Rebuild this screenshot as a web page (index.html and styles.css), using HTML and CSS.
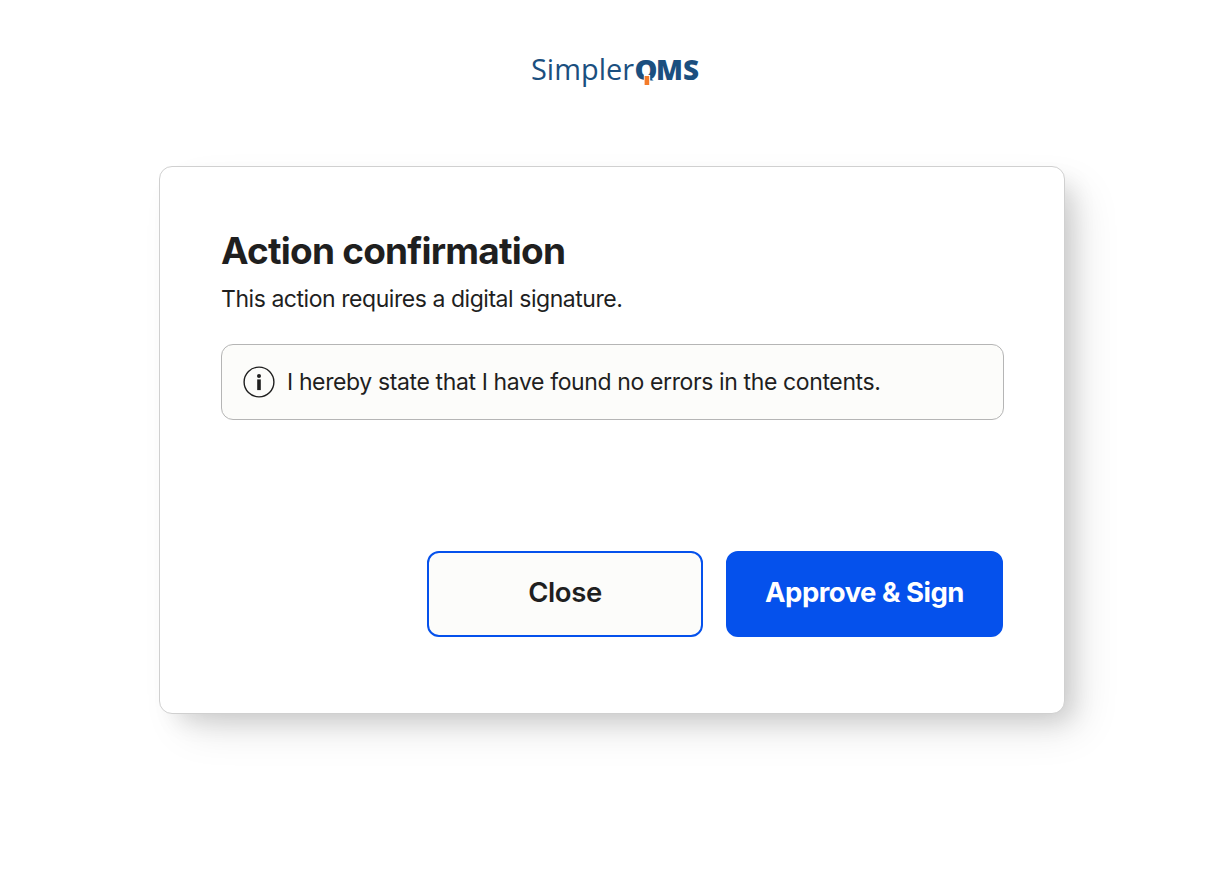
FILE: index.html
```html
<!DOCTYPE html>
<html lang="en">
<head>
    <meta charset="UTF-8">
    <meta name="viewport" content="width=device-width, initial-scale=1.0">
    <title>Action confirmation</title>
    <link rel="stylesheet" href="styles.css">
</head>

<body>
    <header class="header">
        <svg class="logo" width="170" height="44" viewBox="0 0 170 44">
            <clipPath id="qClip">
                <path d="M100 0H130V28.5H119.2V23H112.8V28.5H100Z"/>
            </clipPath>
            <text class="logo-light" x="0" y="28" textLength="103" lengthAdjust="spacingAndGlyphs">Simpler</text>
            <g clip-path="url(#qClip)">
                <text class="logo-bold" x="103.6" y="28" textLength="23" lengthAdjust="spacingAndGlyphs">Q</text>
            </g>
            <text class="logo-bold" x="125" y="28" textLength="43" lengthAdjust="spacingAndGlyphs">MS</text>
            <rect class="logo-mark" x="113.6" y="24" width="4.6" height="9"/>
        </svg>
    </header>

    <main class="card">
        <h1 class="title">Action confirmation</h1>
        <p class="subtitle">This action requires a digital signature.</p>

        <div class="notice">
            <svg class="info-icon" width="32" height="32" viewBox="0 0 32 32">
                <circle cx="16" cy="16" r="14.9" fill="none" stroke="#1f1f1f" stroke-width="1.4"/>
                <circle cx="16" cy="9.9" r="2" fill="#1f1f1f"/>
                <rect x="14.2" y="13.4" width="3.6" height="10.7" fill="#1f1f1f"/>
            </svg>
            <span class="notice-text">I hereby state that I have found no errors in the contents.</span>
        </div>

        <div class="actions">
            <button class="button button-close">Close</button>
            <button class="button button-sign">Approve &amp; Sign</button>
        </div>
    </main>
</body>
</html>
```
FILE: styles.css
```css
* {
    box-sizing: border-box;
}

body {
    margin: 0;
    min-height: 100vh;
    font-family: Inter, "Liberation Sans", sans-serif;
    color: #1f1f1f;
    background-color: white;
}

.header {
    display: flex;
    justify-content: center;
    height: 166px;
    padding: 52px 0 0 8px;
}

.logo {
    overflow: visible;
}

.logo-light,
.logo-bold {
    font-family: "Open Sans", "Noto Sans", sans-serif;
    font-size: 28.5px;
    fill: #1b4f7f;
}

.logo-light {
    font-weight: 400;
}

.logo-bold {
    font-size: 28px;
    font-weight: 800;
}

.logo-mark {
    fill: #f47b29;
}

.card {
    width: 906px;
    height: 548px;
    margin: 0 auto;
    padding: 61px 60px 0 61px;
    background-color: white;
    border: 1px solid #d0d0d0;
    border-radius: 13px;
    box-shadow: 12px 12px 24px -6px rgba(0, 0, 0, 0.13),
        20px 20px 44px -8px rgba(0, 0, 0, 0.13);
}

.title {
    margin: 0;
    font-size: 37px;
    font-weight: 700;
    line-height: 46px;
    letter-spacing: -0.78px;
}

.subtitle {
    margin: 10px 0 0;
    font-size: 23px;
    line-height: 30px;
    letter-spacing: -0.45px;
}

.notice {
    display: flex;
    align-items: center;
    gap: 12px;
    height: 76px;
    margin-top: 30px;
    padding-left: 21px;
    background-color: #fcfcfa;
    border: 1px solid #b5b5b5;
    border-radius: 12px;
}

.notice-text {
    font-size: 23px;
    line-height: 30px;
    letter-spacing: -0.38px;
}

.actions {
    display: flex;
    justify-content: flex-end;
    gap: 23px;
    margin: 131px 1px 0 0;
}

.button {
    width: 277px;
    height: 86px;
    padding: 0 0 4px;
    font-family: inherit;
    font-size: 27.5px;
    font-weight: 600;
    letter-spacing: -0.4px;
    border: 2px solid #0551ec;
    border-radius: 12px;
}

.button-close {
    width: 276px;
    color: #1f1f1f;
    background-color: #fcfcfa;
}

.button-sign {
    color: white;
    font-weight: 700;
    letter-spacing: -0.5px;
    background-color: #0551ec;
}
```
